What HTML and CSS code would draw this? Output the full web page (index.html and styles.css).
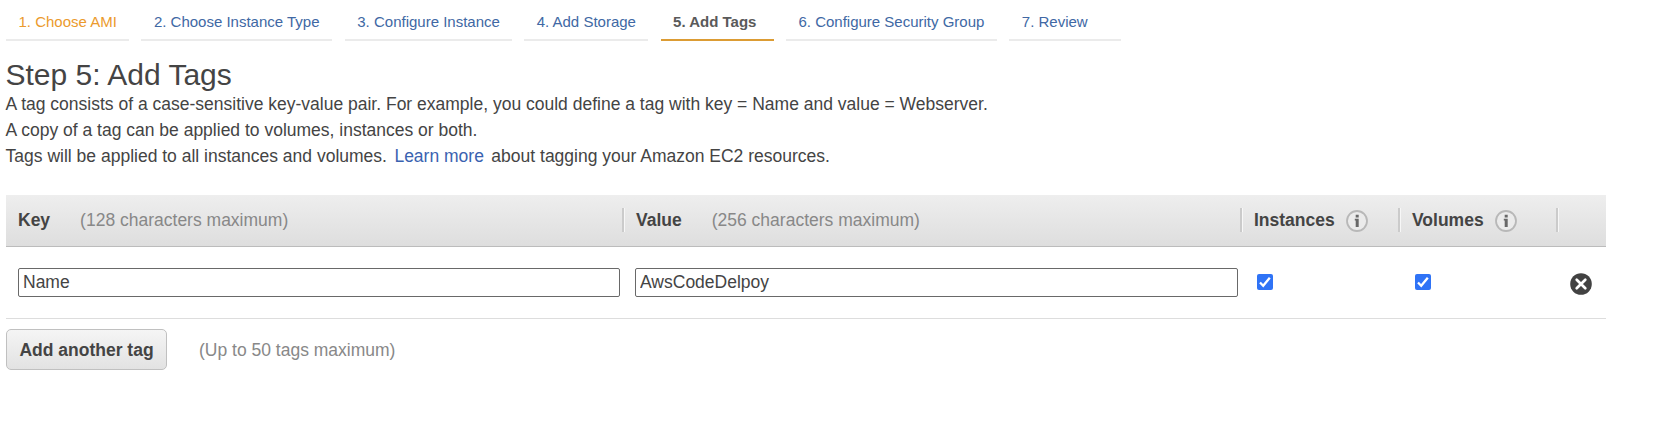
FILE: index.html
```html
<!DOCTYPE html>
<html lang="en">
<head>
<meta charset="utf-8">
<title>Step 5: Add Tags</title>
<link rel="stylesheet" href="styles.css">
</head>
<body>
<nav class="steps">
  <a class="step step-ami">1. Choose AMI</a>
  <a class="step step-type">2. Choose Instance Type</a>
  <a class="step step-configure">3. Configure Instance</a>
  <a class="step step-storage">4. Add Storage</a>
  <a class="step step-tags active">5. Add Tags</a>
  <a class="step step-security">6. Configure Security Group</a>
  <a class="step step-review">7. Review</a>
</nav>
<main>
  <h1 class="title">Step 5: Add Tags</h1>
  <div class="intro">
    <p>A tag consists of a case-sensitive key-value pair. For example, you could define a tag with key = Name and value = Webserver.</p>
    <p>A copy of a tag can be applied to volumes, instances or both.</p>
    <p>Tags will be applied to all instances and volumes. <a class="learn">Learn more</a> about tagging your Amazon EC2 resources.</p>
  </div>
  <section class="table">
    <div class="row head">
      <div class="cell"><b>Key</b><span class="hint">(128 characters maximum)</span></div>
      <div class="cell"><b>Value</b><span class="hint">(256 characters maximum)</span></div>
      <div class="cell"><b>Instances</b>
        <svg class="info" viewBox="0 0 22 22"><circle cx="11" cy="11" r="10" fill="#ebebeb" stroke="#b8b8b8" stroke-width="1.8"/><path d="M9.7 4.8h3v2.6h-3zM8.8 8.8h3.9v8.2h-3v-6.6h-.9z" fill="#686868"/></svg>
      </div>
      <div class="cell"><b>Volumes</b>
        <svg class="info" viewBox="0 0 22 22"><circle cx="11" cy="11" r="10" fill="#ebebeb" stroke="#b8b8b8" stroke-width="1.8"/><path d="M9.7 4.8h3v2.6h-3zM8.8 8.8h3.9v8.2h-3v-6.6h-.9z" fill="#686868"/></svg>
      </div>
      <div class="cell"></div>
    </div>
    <div class="row body">
      <div class="field"><input class="text" type="text" value="Name"></div>
      <div class="field"><input class="text" type="text" value="AwsCodeDelpoy"></div>
      <div class="check"><svg class="box" viewBox="0 0 16 16"><rect width="16" height="16" rx="2" fill="#2f73f6"/><path d="M3 8.5 6.2 11.7 12.8 3.8" fill="none" stroke="#fff" stroke-width="2.3"/></svg></div>
      <div class="check"><svg class="box" viewBox="0 0 16 16"><rect width="16" height="16" rx="2" fill="#2f73f6"/><path d="M3 8.5 6.2 11.7 12.8 3.8" fill="none" stroke="#fff" stroke-width="2.3"/></svg></div>
      <div class="remove"><svg class="cross" viewBox="0 0 22 22"><circle cx="11" cy="11" r="10.8" fill="#424242"/><path d="M6.7 6.7l8.6 8.6M15.3 6.7l-8.6 8.6" stroke="#fff" stroke-width="2.7" stroke-linecap="round"/></svg></div>
    </div>
  </section>
  <div class="footer">
    <button class="add">Add another tag</button>
    <span class="limit">(Up to 50 tags maximum)</span>
  </div>
</main>
</body>
</html>
```
FILE: styles.css
```css
* { box-sizing: border-box; }
body {
  margin: 0;
  padding: 0 0 0 6px;
  background: #fff;
  color: #444;
  font-family: "Liberation Sans", Arial, sans-serif;
  font-size: 17.5px;
}
.steps { display: flex; gap: 12.4px; height: 41px; }
.step {
  height: 41px;
  padding: 0 0 0 12.5px;
  border-bottom: 2px solid #ebebeb;
  color: #4068a4;
  font-size: 15px;
  line-height: 43px;
  white-space: nowrap;
}
.step-ami { width: 123px; color: #eb9a2d; }
.step-type { width: 191px; }
.step-configure { width: 167px; }
.step-storage { width: 124px; }
.step-tags { width: 113px; }
.step-security { width: 211px; }
.step-review { width: 112px; }
.step.active { color: #5a5a5a; font-weight: bold; border-color: #dc9c34; }
.title { margin: 17px 0 0 -.5px; font-size: 30px; font-weight: normal; line-height: 34px; }
.intro { height: 104px; margin-top: -1px; }
.intro p { margin: 0 0 0 -.4px; line-height: 26px; white-space: nowrap; }
.learn { margin: 0 2.6px; color: #3a62b0; }
.table { width: 1600px; }
.row { display: grid; grid-template-columns: 617px 618px 158px 158px 49px; }
.head { height: 52px; background: linear-gradient(#eee, #dedede); border-bottom: 1px solid #bcbcbc; }
.cell { display: flex; align-items: center; padding-left: 12px; position: relative; }
.cell + .cell { padding-left: 13px; }
.cell + .cell::before {
  content: "";
  position: absolute;
  left: -1px;
  top: 13px;
  width: 2px;
  height: 24px;
  background: #cbcbcb;
  border-right: 1px solid #f7f7f7;
}
.hint { margin-left: 30px; }
.hint, .limit { color: #888; }
.info { width: 22px; height: 22px; margin: 1px 0 0 11px; }
.body { height: 72px; align-items: center; border-bottom: 1px solid #ddd; }
.field { padding: 0 3px 0 12px; }
.text {
  display: block;
  width: 100%;
  height: 29px;
  padding: 0 4px;
  border: 1px solid #696969;
  border-radius: 2px;
  color: #444;
  font: inherit;
}
.check { padding: 0 0 1px 16px; }
.box, .cross { display: block; }
.box { width: 16px; height: 16px; }
.remove { padding: 2px 0 0 13px; }
.cross { width: 22px; height: 22px; }
.footer { display: flex; align-items: center; gap: 32px; padding-top: 10px; }
.add {
  width: 161px;
  height: 41px;
  padding: 1px 0 0;
  border: 1px solid #c0c0c0;
  border-radius: 5px;
  background: linear-gradient(#f5f5f5, #e2e2e2);
  color: #444;
  font: bold 17.5px "Liberation Sans", Arial, sans-serif;
}
.limit { padding-top: 1px; }
```
